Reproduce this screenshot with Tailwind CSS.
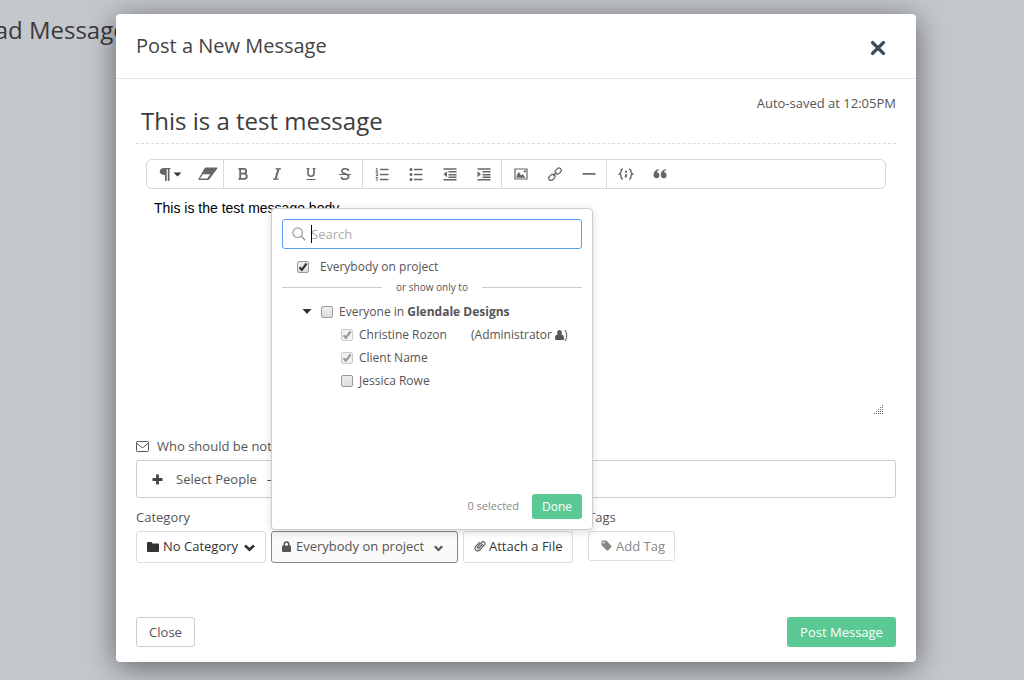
<!DOCTYPE html>
<html lang="en">
<head>
<meta charset="utf-8">
<meta name="viewport" content="width=device-width, initial-scale=1">
<title>Post a New Message</title>
<script src="https://cdn.jsdelivr.net/npm/@tailwindcss/browser@4"></script>
</head>
<body class="relative min-h-screen overflow-hidden bg-[#c4c7cc] font-['Open_Sans',sans-serif] text-[13px] leading-5 text-[#555]">

<!-- Page title behind the dialog -->
<h1 class="absolute -left-[58px] top-[14px] text-2xl text-[#3a3a3a]" aria-hidden="true">Upload Message</h1>

<div class="relative pt-[14px] pr-4 pb-[18px] pl-6">
<main role="dialog" aria-labelledby="dialog-title" class="mx-auto max-w-[800px] rounded bg-white shadow-[0_5px_30px_rgba(0,0,0,0.5)]">

  <header class="flex h-[65px] items-center justify-between border-b border-[#e2e8ef] pr-[30px] pl-5">
    <h2 id="dialog-title" class="text-xl text-[#444]">Post a New Message</h2>
    <button type="button" aria-label="Close dialog" class="mt-[3px]">
      <svg class="size-4" viewBox="0 0 16 16" fill="none" stroke="#3f4b5d" stroke-width="3.4" stroke-linecap="round"><path d="M2.6 2.6 13.4 13.4M13.4 2.6 2.6 13.4"/></svg>
    </button>
  </header>

  <form class="px-5 pb-[15px]">
    <div class="flex h-[65px] items-start border-b border-dashed border-[#ddd] pt-[14px]">
      <input type="text" aria-label="Message title" value="This is a test message" class="mt-[9px] h-9 min-w-0 flex-1 bg-transparent px-[5px] text-2xl text-[#3c3c3c] outline-none">
      <span>Auto-saved at 12:05PM</span>
    </div>

    <div class="px-[10px] pt-[15px]">
      <div role="toolbar" aria-label="Formatting" class="flex h-[30px] rounded-md border border-[#d9d9d9] pb-px text-[#666]">
        <div class="-mb-px flex border-r border-[#d9d9d9]">
          <button type="button" aria-label="Paragraph" class="flex w-[46px] items-center justify-center">
            <svg class="h-4 w-6" viewBox="0 0 24 16"><path fill="currentColor" d="M6 2h6.500v1.300H11.500V15H9.800V3.300H8.700V15H7V9C3.900 9 1.700 7.800 1.700 5.500S3.600 2 6 2Z"/><path fill="#333" d="M15.500 6.500h8L19.500 10.500z"/></svg>
          </button>
          <button type="button" aria-label="Clear formatting" class="flex w-[30px] items-center justify-center">
            <svg class="h-4 w-5" viewBox="0 0 20 16"><path fill="currentColor" d="M8 1.500h10.600c.8 0 1.100.7.6 1.300L11.500 13c-.4.600-1 .9-1.700.9H1.300c-.8 0-1.100-.7-.6-1.300L6.600 2.200c.4-.5.8-.7 1.400-.7Z"/><path fill="#fff" d="M4.800 8.200h7.500l-3.100 4.300H2z"/></svg>
          </button>
        </div>
        <div class="-mb-px flex border-r border-[#d9d9d9] pb-px pl-[2px]">
          <button type="button" aria-label="Bold" class="flex w-[34px] items-center justify-center">
            <svg class="size-4" viewBox="0 0 16 16" fill="none" stroke="currentColor" stroke-width="1.800"><path d="M3.500 2.900h5.300a2.200 2.200 0 0 1 0 4.700H5.200M5.200 7.600h4a2.500 2.500 0 0 1 0 5.200H3.500M5.200 2.900v9.900"/></svg>
          </button>
          <button type="button" aria-label="Italic" class="flex w-[34px] items-center justify-center">
            <svg class="size-4" viewBox="0 0 16 16" fill="none" stroke="currentColor"><path stroke-width="2" d="M9.600 2.800 6.500 13.200"/><path stroke-width="1.200" d="M6.500 2.800H12M4 13.200h5.400"/></svg>
          </button>
          <button type="button" aria-label="Underline" class="flex w-[34px] items-center justify-center">
            <svg class="size-4" viewBox="0 0 16 16" fill="none" stroke="currentColor"><path stroke-width="1.600" d="M5 2.500v4.800a3 3 0 0 0 6 0V2.500"/><path stroke-width="1" d="M3.500 2.600h3M9.600 2.600h3M3.500 13.500h9"/></svg>
          </button>
          <button type="button" aria-label="Strikethrough" class="flex w-[34px] items-center justify-center">
            <svg class="size-4" viewBox="0 0 16 16" fill="none" stroke="currentColor"><path stroke-width="1.600" d="M11.300 5V3.600C10 2.800 5 1.600 4.900 5.200 5 8.500 11.500 7 11.600 10.600c-.1 3.600-5.600 2.900-7 1.700v-1.600"/><path stroke-width="1" d="M2 8.500h12"/></svg>
          </button>
        </div>
        <div class="-mb-px flex border-r border-[#d9d9d9] pb-px pl-[2px]">
          <button type="button" aria-label="Numbered list" class="flex w-[34px] items-center justify-center">
            <svg class="size-4" viewBox="0 0 16 16" fill="none" stroke="currentColor"><path stroke-width="1.500" d="M6 3.500h8.500M6 8.500h8.500M6 13.500h8.500"/><path stroke-width="1" d="M2 2.500h1V5M1.700 5.200h2.300M1.700 6.900h2v1.200L1.900 9.500H4M1.700 11.400h2L2.600 12.700c1.800 0 1.400 2-.9 1.600"/></svg>
          </button>
          <button type="button" aria-label="Bulleted list" class="flex w-[34px] items-center justify-center">
            <svg class="size-4" viewBox="0 0 16 16" fill="currentColor"><path d="M6 2.800h8.500v1.500H6zM6 7.800h8.500v1.500H6zM6 12.800h8.500v1.500H6z"/><circle cx="3" cy="3.500" r="1.500"/><circle cx="3" cy="8.500" r="1.500"/><circle cx="3" cy="13.500" r="1.500"/></svg>
          </button>
          <button type="button" aria-label="Outdent" class="flex w-[34px] items-center justify-center">
            <svg class="size-4" viewBox="0 0 16 16" fill="currentColor"><path d="M1.500 2.300h13v1.500h-13zM6.500 5.100h8v1.500h-8zM6.500 7.900h8v1.500h-8zM6.500 10.600h8v1.500h-8zM1.500 12.900h13v1.500h-13zM5 5.300v6L1.500 8.300z"/></svg>
          </button>
          <button type="button" aria-label="Indent" class="flex w-[34px] items-center justify-center">
            <svg class="size-4" viewBox="0 0 16 16" fill="currentColor"><path d="M1.500 2.300h13v1.500h-13zM6.500 5.100h8v1.500h-8zM6.500 7.900h8v1.500h-8zM6.500 10.600h8v1.500h-8zM1.500 12.900h13v1.500h-13zM1.500 5.300v6L5 8.300z"/></svg>
          </button>
        </div>
        <div class="-mb-px flex border-r border-[#d9d9d9] pb-px pl-[2px]">
          <button type="button" aria-label="Image" class="flex w-[34px] items-center justify-center">
            <svg class="size-4" viewBox="0 0 16 16" fill="currentColor"><path fill="none" stroke="currentColor" stroke-width="1.200" d="M2 3h12v10H2z"/><path d="M3.500 11.800V10l2.200-4.200 2.500 3.700 1.500-1.400 2.700 3.700z"/><circle cx="11.800" cy="5.400" r="1.100"/></svg>
          </button>
          <button type="button" aria-label="Link" class="flex w-[34px] items-center justify-center">
            <svg class="size-4" viewBox="0 0 16 16" fill="none" stroke="currentColor" stroke-width="1.200"><rect x="7.600" y="2.900" width="7" height="4.600" rx="2.300" transform="rotate(-45 11.100 5.200)"/><rect x="1.400" y="9" width="7" height="4.600" rx="2.300" transform="rotate(-45 4.900 11.300)"/><path d="m6 10 4-3.700"/></svg>
          </button>
          <button type="button" aria-label="Horizontal line" class="flex w-[34px] items-center justify-center">
            <svg class="size-4" viewBox="0 0 16 16" stroke="currentColor" stroke-width="1.700"><path d="M1.500 7.900h13"/></svg>
          </button>
        </div>
        <div class="flex pl-[2px]">
          <button type="button" aria-label="Code" class="flex w-[34px] items-center justify-center">
            <svg class="size-4" viewBox="0 0 16 16" fill="none" stroke="currentColor" stroke-width="1.400"><path d="M5 3.100c-1.800 0-1.900.6-1.900 2.200S2.900 7.600 1.600 8c1.300.4 1.500 1.100 1.500 2.700s.1 2.200 1.900 2.200M11 3.100c1.800 0 1.900.6 1.900 2.200s.2 2.300 1.500 2.700c-1.300.4-1.500 1.100-1.500 2.700s-.1 2.200-1.900 2.200"/><path stroke-width="2" d="M8 4.700v2M8 8.300v1.600L7.500 11.500"/></svg>
          </button>
          <button type="button" aria-label="Quote" class="flex w-[34px] items-center justify-center">
            <svg class="size-4" viewBox="0 0 16 16" fill="currentColor"><path d="M7 4C5.700 4.400 4.900 5.400 4.900 6.300c1.400 0 2.500 1 2.500 2.900A2.900 2.900 0 0 1 4.500 12.200C2.600 12.200 1.500 10.700 1.500 8.800 1.500 5.800 3.600 3.700 7 3.300zM14.200 4c-1.300.4-2.100 1.400-2.100 2.300 1.400 0 2.500 1 2.500 2.900a2.900 2.900 0 0 1-2.900 3c-1.900 0-3-1.500-3-3.400 0-3 2.100-5.100 5.500-5.500z"/></svg>
          </button>
        </div>
      </div>
      <div class="relative">
        <textarea aria-label="Message body" class="block h-[228px] w-full resize-none bg-transparent px-2 pt-[9px] font-['Liberation_Sans',Arial,sans-serif] text-sm leading-5 text-black outline-none">This is the test message body.</textarea>
        <svg class="absolute right-[2px] bottom-[2px] size-[10px]" viewBox="0 0 10 10" fill="none" stroke="#666" stroke-dasharray="1 1"><path d="M8 .5h2M6 2.500h4M4 4.500h6M2 6.500h8M0 8.500h10"/></svg>
      </div>
    </div>

    <div class="mt-[19px] flex items-center gap-2">
      <svg class="h-[11px] w-[13px]" viewBox="0 0 13 11" fill="none" stroke="#555"><rect x=".5" y=".5" width="12" height="10" rx=".8"/><path d="m.8 2.300 4.700 3.900q1 .7 2 0l4.700-3.900"/></svg>
      <span>Who should be notified?</span>
    </div>
    <button type="button" class="mt-1 flex h-[38px] w-full items-center rounded-[3px] border border-[#ccc] pl-[15px] text-left">
      <svg class="mr-[13px] size-[11px]" viewBox="0 0 11 11" fill="#444"><path d="M4.100.500h2.800v3.600h3.600v2.800H6.900v3.600H4.100V6.900H.500V4.100h3.600z"/></svg>
      <span>Select People</span><span class="ml-[10px]">–</span>
    </button>

    <div class="flex items-start">
      <div>
        <div class="mt-[9px] mb-1">Category</div>
        <div class="flex gap-[5px]">
          <div class="relative h-8 w-[130px] rounded-[3px] border border-[#ddd] text-[#333]">
            <svg class="pointer-events-none absolute top-[10px] left-[10px] h-[10px] w-[12px]" viewBox="0 0 12 10" fill="#333"><path d="M1 0h3.200q.8 0 .9.900l.1.600H11q1 0 1 1V9q0 1-1 1H1Q0 10 0 9V1q0-1 1-1Z"/></svg>
            <select aria-label="Category" class="h-full w-full appearance-none bg-transparent pb-[2px] pl-[26px] outline-none"><option>No Category</option></select>
            <svg class="pointer-events-none absolute top-[12px] right-[10px] h-2 w-[11px]" viewBox="0 0 11 8" fill="none" stroke="#333" stroke-width="2.600"><path d="m1 1.500 4.500 4.300L10 1.500"/></svg>
          </div>

          <div class="relative">
            <button type="button" aria-expanded="true" aria-controls="people" class="flex h-8 w-[187px] items-center rounded-[3px] border border-[#888] bg-[#fafafa] pb-[2px] pl-[10px] whitespace-nowrap">
              <svg class="mr-[5px] h-[11px] w-[9px]" viewBox="0 0 9 11" fill="#555"><path d="M0 5.500q0-1 1-1h.5V3.200a3 3 0 0 1 6 0v1.300H8q1 0 1 1V10q0 1-1 1H1q-1 0-1-1zM3 4.500h3V3.200a1.500 1.500 0 0 0-3 0z"/></svg>
              Everybody on project
              <svg class="mt-1 ml-[10px] h-[7px] w-[9px]" viewBox="0 0 9 7" fill="none" stroke="#555" stroke-width="2.200"><path d="M.8 1.200 4.500 5l3.700-3.800"/></svg>
            </button>

            <!-- Visibility picker -->
            <section id="people" aria-label="Who can see this" class="absolute bottom-full left-0 z-10 mb-px flex h-[322px] w-[322px] flex-col rounded-sm border border-[#ccc] bg-white p-[10px] text-xs leading-[23px] shadow-[0_2px_8px_rgba(0,0,0,0.15)]">
              <div class="relative">
                <input type="text" aria-label="Search people" placeholder="Search" class="h-[30px] w-full rounded-[3px] border border-[#5b9ff0] pr-2 pl-7 text-[13px] outline-none placeholder:text-[#aaa]">
                <svg class="pointer-events-none absolute top-2 left-[10px] size-[14px]" viewBox="0 0 14 14" fill="none" stroke="#999" stroke-width="1.200"><circle cx="5.700" cy="5.700" r="4.800"/><path stroke-width="1.500" d="m9.300 9.300 3.900 3.900"/></svg>
                <span class="absolute top-[6px] left-[29px] h-[18px] w-px bg-black"></span>
              </div>
              <label class="mt-[6px] flex items-center pl-[15px]">
                <span class="mr-[11px] grid size-3 place-items-center"><input type="checkbox" checked class="col-start-1 row-start-1 size-3 appearance-none rounded-xs border border-[#999] bg-gradient-to-b from-[#eee] to-[#ddd]"><svg class="pointer-events-none col-start-1 row-start-1 size-[10px]" viewBox="0 0 10 10" fill="none" stroke="#333" stroke-width="2.200"><path d="m1.500 5.300 2.300 2.500L8.600 1.500"/></svg></span>
                Everybody on project
              </label>
              <div class="flex h-[18px] items-center text-[10px]">
                <span class="h-px flex-1 bg-[#ccc]"></span><span class="w-[100px] text-center">or show only to</span><span class="h-px flex-1 bg-[#ccc]"></span>
              </div>
              <div class="mt-1 flex items-center pl-[20px]">
                <button type="button" aria-label="Collapse group" class="mr-[9px]"><svg class="h-[5px] w-[10px]" viewBox="0 0 10 5" fill="#2b3440"><path d="M.5 0h9L5 5z"/></svg></button>
                <label class="flex items-center whitespace-pre"><input type="checkbox" class="mr-[6px] size-3 appearance-none rounded-xs border border-[#999] bg-gradient-to-b from-[#eee] to-[#ddd]">Everyone in <b>Glendale Designs</b></label>
              </div>
              <label class="flex items-center pl-[59px]">
                <span class="mr-[6px] grid size-3 place-items-center"><input type="checkbox" checked disabled class="col-start-1 row-start-1 size-3 appearance-none rounded-xs border border-[#ccc] bg-[#f2f2f2]"><svg class="pointer-events-none col-start-1 row-start-1 size-[10px]" viewBox="0 0 10 10" fill="none" stroke="#999" stroke-width="2.200"><path d="m1.500 5.300 2.300 2.500L8.600 1.500"/></svg></span>
                <span class="w-28">Christine Rozon</span>
                <span class="flex items-center">(Administrator
                  <svg class="ml-[3px] h-[10px] w-[9px]" viewBox="0 0 9 10" fill="#555"><path d="M4.500 0a2.500 2.700 0 0 1 1.700 4.600C8 4.800 9 6 9 8.500 9 9.500 8.500 10 7.500 10h-6C.5 10 0 9.500 0 8.500 0 6 1 4.800 2.800 4.600A2.500 2.700 0 0 1 4.500 0Z"/></svg>)</span>
              </label>
              <label class="flex items-center pl-[59px]">
                <span class="mr-[6px] grid size-3 place-items-center"><input type="checkbox" checked disabled class="col-start-1 row-start-1 size-3 appearance-none rounded-xs border border-[#ccc] bg-[#f2f2f2]"><svg class="pointer-events-none col-start-1 row-start-1 size-[10px]" viewBox="0 0 10 10" fill="none" stroke="#999" stroke-width="2.200"><path d="m1.500 5.300 2.300 2.500L8.600 1.500"/></svg></span>
                Client Name
              </label>
              <label class="flex items-center pl-[59px]"><input type="checkbox" class="mr-[6px] size-3 appearance-none rounded-xs border border-[#999] bg-gradient-to-b from-[#eee] to-[#ddd]">Jessica Rowe</label>
              <div class="mt-auto flex items-start justify-end gap-[13px]">
                <span class="text-[11px] text-[#888]">0 selected</span>
                <button type="button" class="h-[25px] w-[50px] rounded-[3px] bg-[#5ac994] font-medium text-white">Done</button>
              </div>
            </section>
          </div>

          <button type="button" class="flex h-8 w-[110px] items-center rounded-[3px] border border-[#ddd] pb-[2px] pl-[10px] whitespace-nowrap text-[#333]">
            <svg class="mr-[3px] size-3" viewBox="0 0 12 12" fill="none" stroke="#555" stroke-width="1.100"><path d="M8.800 4 5 8c-1 1-2.300-.2-1.300-1.300l4-4.300c1.700-1.800 4.500.3 2.700 2.500L5.700 10C3.500 12.200-.5 9.500 1.500 6.700l4.300-4.500"/></svg>
            Attach a File
          </button>
        </div>
      </div>
      <div class="ml-[15px]">
        <div class="mt-[9px] mb-1">Tags</div>
        <button type="button" class="flex h-[30px] w-[87px] items-center rounded-[3px] border border-[#ddd] pb-px pl-3 whitespace-nowrap text-[#888]">
          <svg class="mr-1 size-[11px]" viewBox="0 0 11 11" fill="#888"><path fill-rule="evenodd" d="M1 .5h3.700q.6 0 1 .4l4.700 4.800q.6.600 0 1.200L6.900 10.400q-.6.600-1.200 0L.9 5.600Q.5 5.200.5 4.700V1Q.5.500 1 .500ZM2.600 3.600a1 1 0 1 0 0-2 1 1 0 0 0 0 2Z"/></svg>
          Add Tag
        </button>
      </div>
    </div>

    <footer class="mt-[54px] flex justify-between">
      <button type="button" class="h-[30px] w-[59px] rounded-[3px] border border-[#ccc]">Close</button>
      <button type="submit" class="h-[30px] w-[109px] rounded-[3px] bg-[#5ac994] font-medium text-white">Post Message</button>
    </footer>
  </form>
</main>
</div>
</body>
</html>
